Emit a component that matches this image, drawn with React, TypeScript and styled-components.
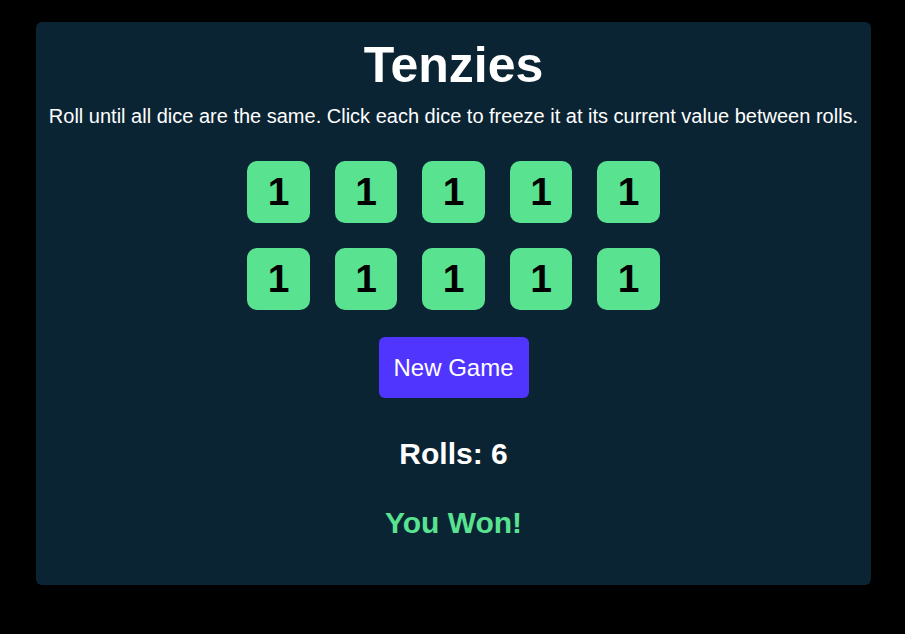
import styled, { createGlobalStyle } from "styled-components";

const GlobalStyle = createGlobalStyle`
  html, body {
    margin: 0;
    padding: 0;
    background-color: #000;
    font-family: "Liberation Sans", Arial, sans-serif;
  }
`;

const Board = styled.main`
  width: 835px;
  height: 563px;
  margin: 22px 0 0 36px;
  box-sizing: border-box;
  background-color: #0b2434;
  border-radius: 6px;
  display: flex;
  flex-direction: column;
  align-items: center;
  color: #fff;
`;

const Title = styled.h1`
  font-size: 50px;
  font-weight: 700;
  margin: 14px 0 0;
  line-height: 58px;
`;

const Instructions = styled.p`
  font-size: 20px;
  margin: 11px 0 0;
  line-height: 23px;
`;

const DiceGrid = styled.div`
  display: grid;
  grid-template-columns: repeat(5, 62.5px);
  column-gap: 25px;
  row-gap: 25px;
  margin-top: 33px;
`;

const Die = styled.button<{ $held: boolean }>`
  width: 62.5px;
  height: 62px;
  border: none;
  border-radius: 10px;
  background-color: ${(p) => (p.$held ? "#59e391" : "#ffffff")};
  color: #000;
  font-family: inherit;
  font-size: 39px;
  font-weight: 700;
  padding: 0;
  cursor: pointer;
`;

const RollButton = styled.button`
  margin-top: 27px;
  width: 150px;
  height: 61px;
  border: none;
  border-radius: 6px;
  background-color: #5035ff;
  color: #fff;
  font-family: inherit;
  font-size: 24px;
  cursor: pointer;
`;

const Status = styled.h2<{ $win?: boolean }>`
  font-size: 30px;
  font-weight: 700;
  margin: ${(p) => (p.$win ? "35px 0 0" : "39px 0 0")};
  line-height: 34px;
  color: ${(p) => (p.$win ? "#59e391" : "#fff")};
`;

const dice = Array.from({ length: 10 }, (_, i) => ({ id: i, value: 1, held: true }));

export default function App() {
  return (
    <>
      <GlobalStyle />
      <Board>
        <Title>Tenzies</Title>
        <Instructions>
          Roll until all dice are the same. Click each dice to freeze it at its current value between rolls.
        </Instructions>
        <DiceGrid>
          {dice.map((d) => (
            <Die key={d.id} $held={d.held}>
              {d.value}
            </Die>
          ))}
        </DiceGrid>
        <RollButton>New Game</RollButton>
        <Status>Rolls: 6</Status>
        <Status $win>You Won!</Status>
      </Board>
    </>
  );
}
